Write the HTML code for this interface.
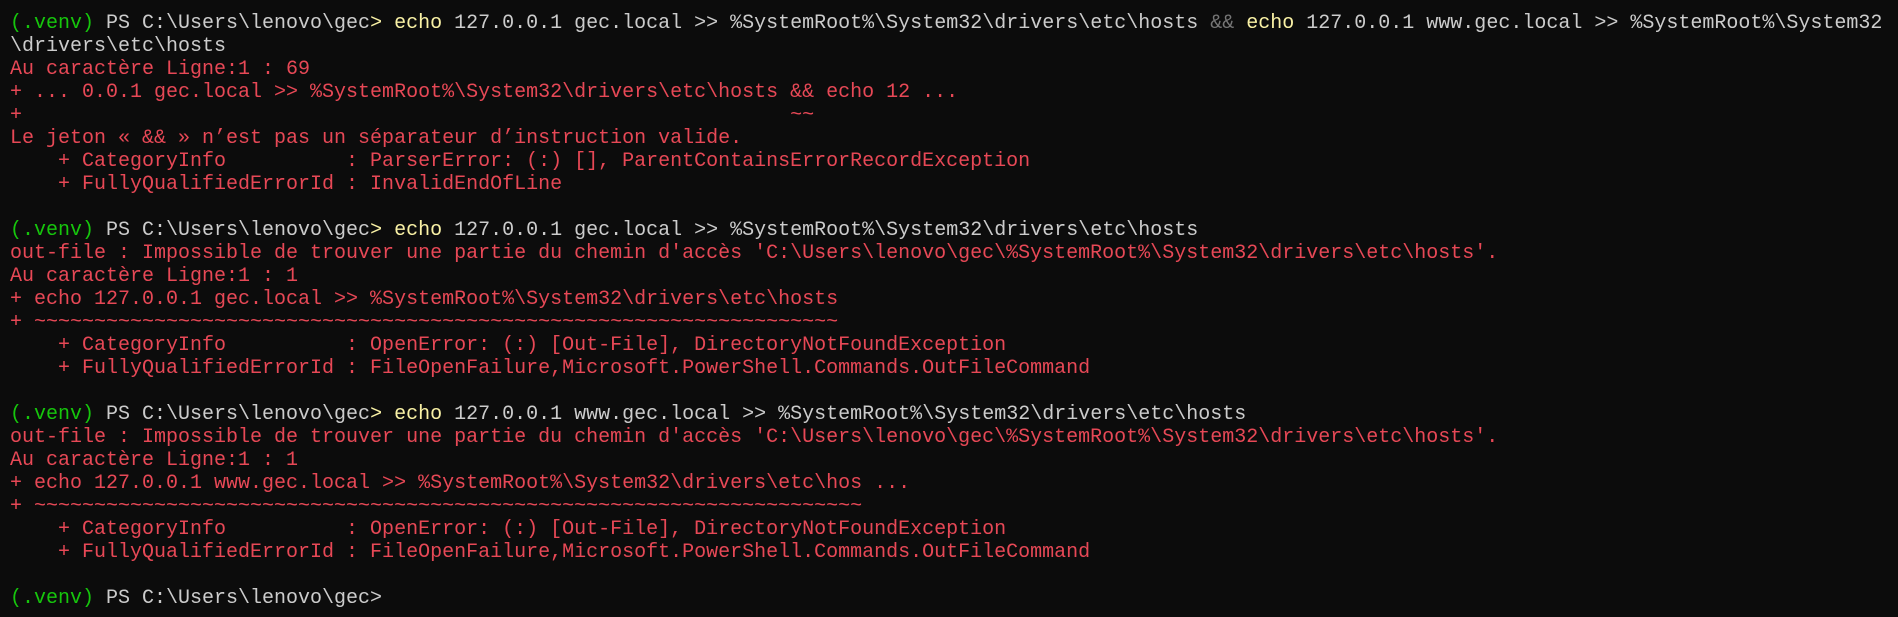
<!DOCTYPE html>
<html><head><meta charset="utf-8"><style>
html,body{margin:0;padding:0;background:#0c0c0c;width:1898px;height:617px;overflow:hidden}
pre{margin:0;position:absolute;left:10px;top:12px;font-family:"Liberation Mono",monospace;font-size:20px;line-height:23px;color:#cccccc;white-space:pre}
.g{color:#16c60c}.y{color:#f9f1a5}.r{color:#e74856}.d{color:#767676}
</style></head><body><pre><span class="g">(.venv)</span> PS C:\Users\lenovo\gec<span class="y">&gt;</span> <span class="y">echo</span> 127.0.0.1 gec.local &gt;&gt; %SystemRoot%\System32\drivers\etc\hosts <span class="d">&amp;&amp;</span> <span class="y">echo</span> 127.0.0.1 www.gec.local &gt;&gt; %SystemRoot%\System32
\drivers\etc\hosts
<span class="r">Au caractère Ligne:1 : 69
+ ... 0.0.1 gec.local &gt;&gt; %SystemRoot%\System32\drivers\etc\hosts &amp;&amp; echo 12 ...
+                                                                ~~
Le jeton « &amp;&amp; » n’est pas un séparateur d’instruction valide.
    + CategoryInfo          : ParserError: (:) [], ParentContainsErrorRecordException
    + FullyQualifiedErrorId : InvalidEndOfLine</span>

<span class="g">(.venv)</span> PS C:\Users\lenovo\gec<span class="y">&gt;</span> <span class="y">echo</span> 127.0.0.1 gec.local &gt;&gt; %SystemRoot%\System32\drivers\etc\hosts
<span class="r">out-file : Impossible de trouver une partie du chemin d'accès 'C:\Users\lenovo\gec\%SystemRoot%\System32\drivers\etc\hosts'.
Au caractère Ligne:1 : 1
+ echo 127.0.0.1 gec.local &gt;&gt; %SystemRoot%\System32\drivers\etc\hosts
+ ~~~~~~~~~~~~~~~~~~~~~~~~~~~~~~~~~~~~~~~~~~~~~~~~~~~~~~~~~~~~~~~~~~~
    + CategoryInfo          : OpenError: (:) [Out-File], DirectoryNotFoundException
    + FullyQualifiedErrorId : FileOpenFailure,Microsoft.PowerShell.Commands.OutFileCommand</span>

<span class="g">(.venv)</span> PS C:\Users\lenovo\gec<span class="y">&gt;</span> <span class="y">echo</span> 127.0.0.1 www.gec.local &gt;&gt; %SystemRoot%\System32\drivers\etc\hosts
<span class="r">out-file : Impossible de trouver une partie du chemin d'accès 'C:\Users\lenovo\gec\%SystemRoot%\System32\drivers\etc\hosts'.
Au caractère Ligne:1 : 1
+ echo 127.0.0.1 www.gec.local &gt;&gt; %SystemRoot%\System32\drivers\etc\hos ...
+ ~~~~~~~~~~~~~~~~~~~~~~~~~~~~~~~~~~~~~~~~~~~~~~~~~~~~~~~~~~~~~~~~~~~~~
    + CategoryInfo          : OpenError: (:) [Out-File], DirectoryNotFoundException
    + FullyQualifiedErrorId : FileOpenFailure,Microsoft.PowerShell.Commands.OutFileCommand</span>

<span class="g">(.venv)</span> PS C:\Users\lenovo\gec&gt;</pre></body></html>
